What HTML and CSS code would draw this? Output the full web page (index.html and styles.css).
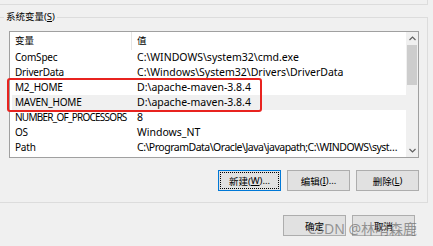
FILE: index.html
```html
<!DOCTYPE html>
<html>
<head>
<meta charset="utf-8">
<link rel="stylesheet" href="styles.css">
</head>
<body>
<div class="prev-box"></div>
<fieldset class="group">
  <legend class="group-label">系统变量(<u>S</u>)</legend>
  <div class="list">
    <div class="list-body">
      <div class="row head"><span class="c1 cjk">变量</span><span class="c2 cjk">值</span></div>
      <div class="row"><span class="c1">ComSpec</span><span class="c2">C:\WINDOWS\system32\cmd.exe</span></div>
      <div class="row"><span class="c1">DriverData</span><span class="c2">C:\Windows\System32\Drivers\DriverData</span></div>
      <div class="row"><span class="c1">M2_HOME</span><span class="c2">D:\apache-maven-3.8.4</span></div>
      <div class="row hover"><span class="c1">MAVEN_HOME</span><span class="c2">D:\apache-maven-3.8.4</span></div>
      <div class="row"><span class="c1 long">NUMBER_OF_PROCESSORS</span><span class="c2">8</span></div>
      <div class="row"><span class="c1">OS</span><span class="c2">Windows_NT</span></div>
      <div class="row"><span class="c1">Path</span><span class="c2 path">C:\ProgramData\Oracle\Java\javapath;C:\WINDOWS\system32;C:\WINDOWS</span></div>
    </div>
    <div class="scrollbar">
      <svg class="arrow" width="7" height="5" viewBox="0 0 7 5"><path d="M0.5 4 L3.5 1 L6.5 4" fill="none" stroke="#606060" stroke-width="1.2"/></svg>
      <div class="track"><div class="thumb"></div></div>
      <svg class="arrow" width="7" height="5" viewBox="0 0 7 5"><path d="M0.5 1 L3.5 4 L6.5 1" fill="none" stroke="#606060" stroke-width="1.2"/></svg>
    </div>
    <div class="highlight"></div>
  </div>
  <div class="buttons">
    <button class="btn focused"><span class="focus-ring">新建(<u>W</u>)...</span></button>
    <button class="btn">编辑(<u>I</u>)...</button>
    <button class="btn">删除(<u>L</u>)</button>
  </div>
</fieldset>
<div class="buttons bottom">
  <button class="btn">确定</button>
  <button class="btn">取消</button>
</div>
<div class="red-box"></div>
<div class="watermark">CSDN @林哨森鹿</div>
</body>
</html>
```

FILE: styles.css
```css
html, body {
  margin: 0;
  padding: 0;
}
body {
  background: #f0f0f0;
  width: 433px;
  height: 246px;
  overflow: hidden;
  position: relative;
  font-family: "Noto Sans", "Noto Sans CJK SC", sans-serif;
  font-size: 10px;
  color: #000;
}
.prev-box {
  height: 4px;
  width: 427px;
  border-right: 1px solid #dcdcdc;
  border-bottom: 1px solid #dcdcdc;
}
.group {
  margin: 4px 5px 0 0;
  padding: 6px 8px 11px 9px;
  border: 1px solid #dcdcdc;
  border-left: none;
  min-width: 0;
}
.group-label {
  padding: 0 2px;
  margin-left: -5px;
  line-height: 16px;
  font-size: 9.5px;
}
.list {
  position: relative;
  height: 125px;
  border: 1px solid #a0a0a0;
  background: #fff;
  display: flex;
}
.list-body {
  flex: 1;
  min-width: 0;
}
.row {
  display: flex;
  height: 15px;
  line-height: 15px;
  white-space: nowrap;
  position: relative;
  z-index: 1;
}
.row.head {
  height: 18px;
  line-height: 17px;
}
.cjk {
  font-size: 9.5px;
}
.c1 {
  width: 122px;
  padding-left: 5px;
  box-sizing: border-box;
  flex: none;
  overflow: hidden;
  letter-spacing: -0.2px;
}
.c1.long {
  letter-spacing: -0.75px;
}
.c2 {
  flex: 1;
  padding-left: 5px;
  padding-right: 4px;
  overflow: hidden;
  text-overflow: ellipsis;
  font-size: 10.5px;
}
.c2.path {
  letter-spacing: -0.5px;
}
.head .c1 {
  border-right: 1px solid #e5e5e5;
  letter-spacing: 0;
}
.head .c2 {
  font-size: 9.5px;
}
.highlight {
  position: absolute;
  left: 2px;
  right: 12px;
  top: 63px;
  height: 15px;
  background: #f0f0f0;
}
.scrollbar {
  width: 12px;
  background: #f0f0f0;
  display: flex;
  flex-direction: column;
  align-items: center;
}
.arrow {
  flex: none;
  margin: 4px 0;
}
.track {
  flex: 1;
  width: 100%;
}
.thumb {
  margin: 0 1px;
  height: 40px;
  background: #cdcdcd;
}
.buttons {
  display: flex;
  justify-content: flex-end;
  gap: 6px;
  margin-top: 12px;
}
.btn {
  width: 63px;
  height: 21px;
  padding: 0;
  margin: 0;
  background: #e1e1e1;
  border: 1px solid #adadad;
  font-family: "Noto Sans", "Noto Sans CJK SC", sans-serif;
  font-size: 9.5px;
  color: #000;
  display: flex;
  align-items: center;
  justify-content: center;
}
.btn.focused {
  border: 1px solid #0078d7;
  padding: 1px;
}
.focus-ring {
  flex: 1;
  align-self: stretch;
  border: 1px dotted #000;
  display: flex;
  align-items: center;
  justify-content: center;
}
.bottom {
  padding-right: 18px;
  margin-top: 12px;
}
.red-box {
  position: absolute;
  left: 7px;
  top: 78px;
  width: 251px;
  height: 30px;
  border: 2px solid #e8231f;
  border-radius: 3px;
  z-index: 3;
}
.watermark {
  position: absolute;
  right: 16px;
  top: 219px;
  font-size: 14px;
  line-height: 20px;
  color: rgba(110, 110, 110, 0.7);
  font-family: "Noto Sans", "Noto Sans CJK SC", sans-serif;
  z-index: 2;
}
```
